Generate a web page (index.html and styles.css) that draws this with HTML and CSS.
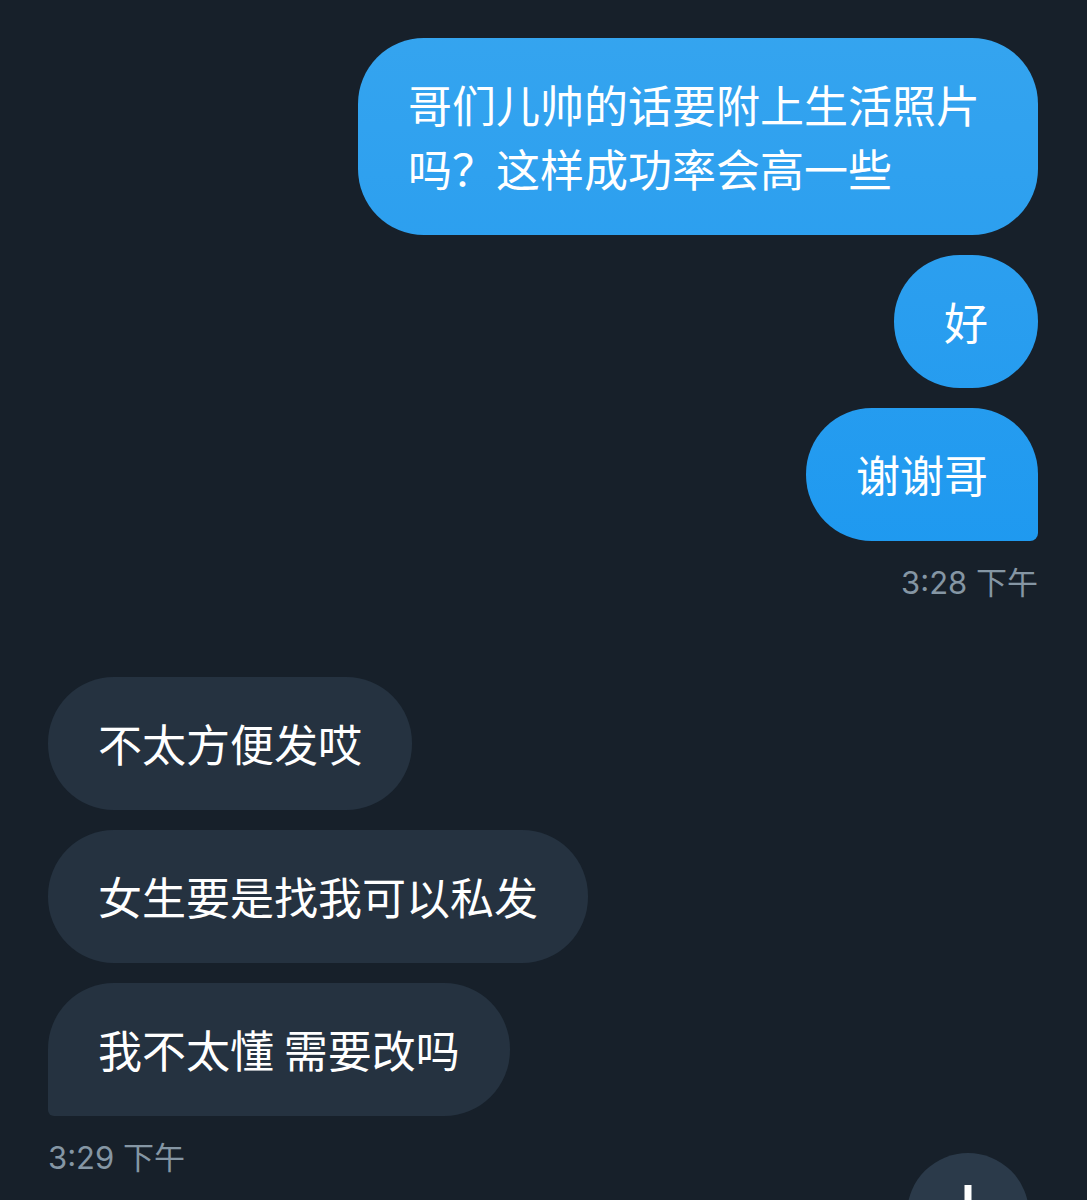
FILE: index.html
```html
<!DOCTYPE html>
<html lang="zh-CN">
<head>
    <meta charset="UTF-8">
    <meta name="viewport" content="width=device-width, initial-scale=1.0">
    <title>私信</title>
    <link rel="stylesheet" href="styles.css">
</head>
<body>

    <!-- 对话 -->
    <div class="chat">
        <div class="group sent">
            <div class="bubble">哥们儿帅的话要附上生活照片吗？这样成功率会高一些</div>
            <div class="bubble">好</div>
            <div class="bubble last">谢谢哥</div>
            <div class="time">3:28 下午</div>
        </div>

        <div class="group received">
            <div class="bubble">不太方便发哎</div>
            <div class="bubble">女生要是找我可以私发</div>
            <div class="bubble last">我不太懂 需要改吗</div>
            <div class="time">3:29 下午</div>
        </div>
    </div>

    <!-- 回到底部 -->
    <button class="scroll-down" aria-label="回到底部">
        <svg width="40" height="60" viewBox="0 0 40 60">
            <path d="M20 32 V70" stroke="#fff" stroke-width="7" fill="none"/>
        </svg>
    </button>

</body>
</html>
```

FILE: styles.css
```css
body {
    margin: 0;
    padding: 38px 49px 0 48px;
    height: 1200px;
    box-sizing: border-box;
    overflow: hidden;
    position: relative;
    background-color: #17202a;
    font-family: "Noto Sans CJK SC", "Noto Sans", sans-serif;
}
.group {
    display: flex;
    flex-direction: column;
    gap: 20px;
}
.sent {
    align-items: flex-end;
}
.received {
    align-items: flex-start;
    margin-top: 74px;
}
.bubble {
    max-width: 580px;
    padding: 34px 50px 35px;
    font-size: 44px;
    line-height: 64px;
    color: #fff;
    border-radius: 66px;
}
.sent .bubble {
    background: linear-gradient(#36a5ef 0px, #2a9eef 300px, #1e99f0 560px) fixed;
}
.sent .bubble.last {
    border-bottom-right-radius: 8px;
}
.received .bubble {
    background: #253240;
}
.received .bubble.last {
    border-bottom-left-radius: 6px;
}
.time {
    margin-top: 2px;
    font-family: "Inter", "Noto Sans CJK SC", sans-serif;
    font-size: 31px;
    line-height: 40px;
    color: #8596a4;
}
.scroll-down {
    position: absolute;
    left: 907px;
    top: 1153px;
    width: 122px;
    height: 122px;
    border: none;
    border-radius: 50%;
    background: #2b3a4a;
    padding: 0;
    display: flex;
    justify-content: center;
    align-items: flex-start;
}
```
